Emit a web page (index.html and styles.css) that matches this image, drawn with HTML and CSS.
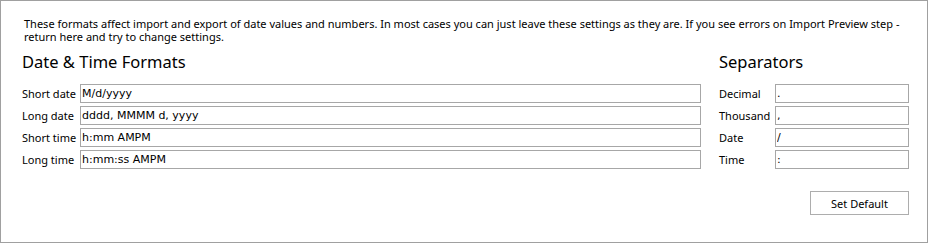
FILE: index.html
```
<!DOCTYPE html>
<html lang="en">
<head>
    <meta charset="UTF-8">
    <title>Formats</title>
    <link rel="stylesheet" href="styles.css">
</head>
<body>
    <div class="panel">
        <p class="intro">These formats affect import and export of date values and numbers. In most cases you can just leave these settings as they are. If you see errors on Import Preview step - return here and try to change settings.</p>

        <div class="columns">
            <div class="formats">
                <h2>Date &amp; Time Formats</h2>
                <div class="field-grid">
                    <label>Short date</label><input type="text" value="M/d/yyyy">
                    <label>Long date</label><input type="text" value="dddd, MMMM d, yyyy">
                    <label>Short time</label><input type="text" value="h:mm AMPM">
                    <label>Long time</label><input type="text" value="h:mm:ss AMPM">
                </div>
            </div>

            <div class="separators">
                <h2>Separators</h2>
                <div class="field-grid sep-grid">
                    <label>Decimal</label><input type="text" value=".">
                    <label>Thousand</label><input type="text" value=",">
                    <label>Date</label><input type="text" value="/">
                    <label>Time</label><input type="text" value=":">
                </div>
                <div class="actions">
                    <button class="btn">Set Default</button>
                </div>
            </div>
        </div>
    </div>
</body>
</html>
```

FILE: styles.css
```
* {
    margin: 0;
    padding: 0;
    box-sizing: border-box;
}

body {
    background: #fff;
    font-family: 'Noto Sans', 'Liberation Sans', sans-serif;
    font-size: 11px;
    color: #000;
}

.panel {
    width: 928px;
    height: 243px;
    border: 1px solid #a0a0a0;
    padding: 16px 18px 0 21px;
}

.intro {
    margin-left: 2px;
    line-height: 13px;
}

.columns {
    display: flex;
    gap: 18px;
    margin-top: 9px;
}

.formats {
    flex: 1;
}

.separators {
    width: 190px;
}

h2 {
    font-weight: normal;
    font-size: 16.5px;
    line-height: 20px;
    height: 32px;
}

.field-grid {
    display: grid;
    grid-template-columns: 58px minmax(0, 1fr);
    row-gap: 3px;
    align-items: center;
}

.sep-grid {
    grid-template-columns: 56px minmax(0, 1fr);
}

.field-grid label {
    line-height: 19px;
}

.field-grid input {
    width: 100%;
    height: 19px;
    border: 1px solid #a7a7a7;
    padding: 0 1px;
    font-family: 'DejaVu Sans', sans-serif;
    font-size: 11px;
    color: #000;
    outline: none;
}

.actions {
    display: flex;
    justify-content: flex-end;
    margin-top: 22px;
}

.btn {
    width: 99px;
    height: 24px;
    background: #fff;
    border: 1px solid #adadad;
    font-family: inherit;
    font-size: 11px;
    color: #000;
}
```
